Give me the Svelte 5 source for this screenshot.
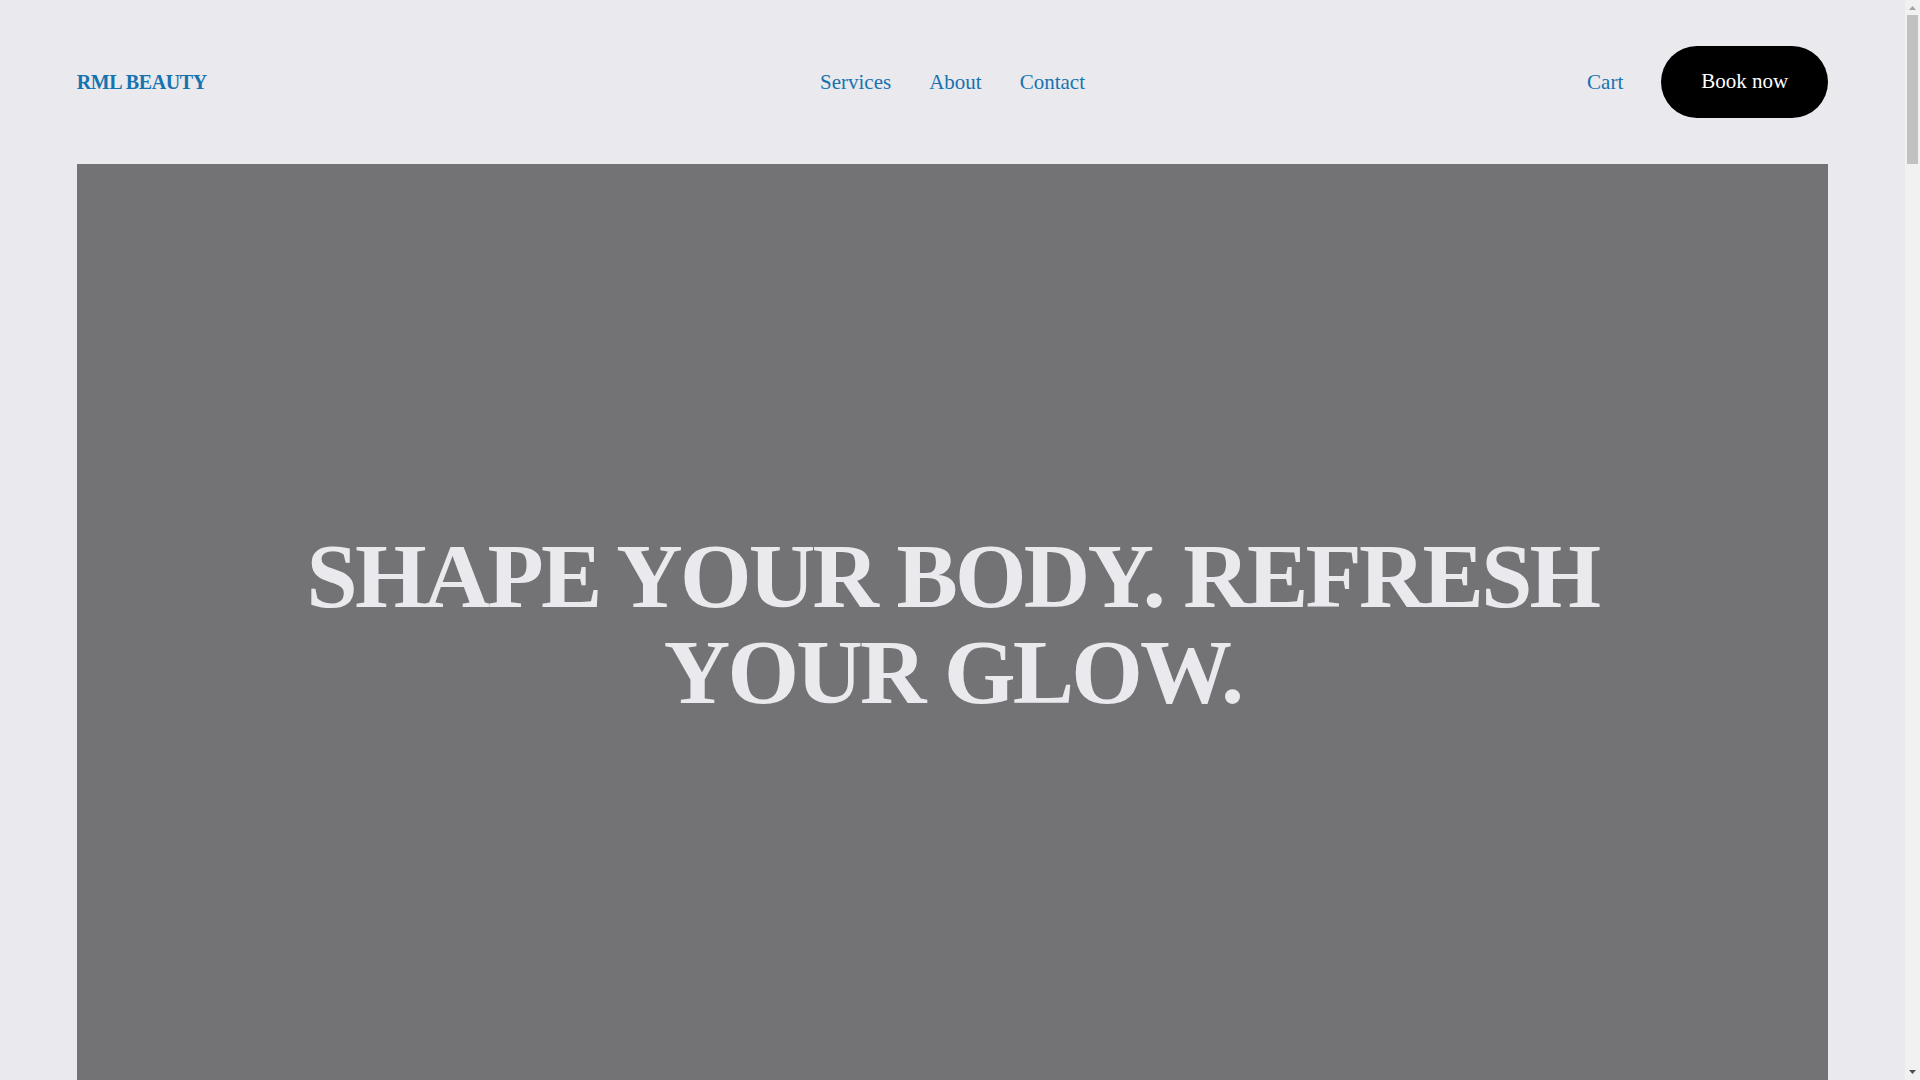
<script>
  const links = ['Services', 'About', 'Contact'];
</script>

<div class="window">
  <div class="page">
    <header>
      <a class="brand" href="#home">RML BEAUTY</a>
      <nav aria-label="Main">
        {#each links as link}
          <a href="#{link.toLowerCase()}">{link}</a>
        {/each}
      </nav>
      <div class="actions">
        <a href="#cart">Cart</a>
        <a class="book" href="#book">Book now</a>
      </div>
    </header>
    <main>
      <h1>SHAPE YOUR BODY. REFRESH YOUR GLOW.</h1>
    </main>
  </div>
  <div class="scrollbar" aria-hidden="true">
    <svg width="15" height="15" viewBox="0 0 15 15"><path d="M4 10h7L7.500 6z" fill="#a3a3a3" /></svg>
    <div class="track"><div class="thumb"></div></div>
    <svg width="15" height="15" viewBox="0 0 15 15"><path d="M4 5h7L7.500 9z" fill="#505050" /></svg>
  </div>
</div>

<style>
  :global(body) {
    margin: 0;
    background: #e9e9ee;
    font-family: "Liberation Serif", serif;
  }
  .window {
    display: flex;
    height: 100vh;
    overflow: hidden;
  }
  .page {
    flex: 1;
    display: flex;
    flex-direction: column;
    padding: 0 4vw;
  }
  header {
    display: grid;
    grid-template-columns: 1fr auto 1fr;
    align-items: center;
    padding: 46px 0;
    font-size: 21px;
    line-height: 32px;
  }
  a {
    color: #1773b0;
    text-decoration: none;
  }
  .brand {
    font-size: 20px;
    font-weight: bold;
    letter-spacing: -0.02em;
  }
  nav {
    display: flex;
    gap: 38px;
  }
  .actions {
    display: flex;
    justify-content: flex-end;
    align-items: center;
    gap: 38px;
  }
  .book {
    padding: 19px 40px 21px;
    border-radius: 36px;
    background: #000;
    color: #fff;
  }
  main {
    flex: 1;
    display: flex;
    justify-content: center;
    padding: 364px 12% 0;
    background: #737375;
  }
  h1 {
    margin: 0;
    color: #e9e9ee;
    font-size: 92px;
    line-height: 96px;
    letter-spacing: -0.03em;
    text-align: center;
  }
  .scrollbar {
    display: flex;
    flex-direction: column;
    width: 15px;
    background: #f1f1f1;
  }
  .track {
    flex: 1;
    padding: 0 2px;
  }
  .thumb {
    height: 149px;
    background: #c1c1c1;
  }
</style>
